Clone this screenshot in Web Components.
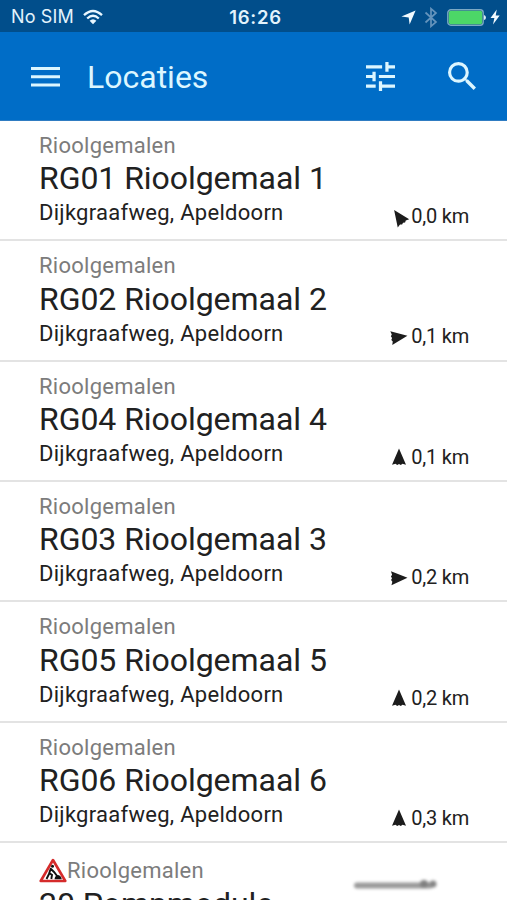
<!DOCTYPE html>
<html lang="nl">
<head>
<meta charset="utf-8">
<title>Locaties</title>
<style>
  body {
    margin: 0;
    height: 900px;
    overflow: hidden;
    background: #fff;
    font-family: Roboto, "Liberation Sans", sans-serif;
  }
</style>
</head>
<body>
<locaties-app></locaties-app>

<template id="status-bar">
<style>
  :host {
    display: grid;
    grid-template-columns: 1fr auto 1fr;
    align-items: center;
    height: 32px;
    padding: 2px 7px 0 11px;
    box-sizing: border-box;
    background: #014e8b;
    color: #e3f3fc;
    font: 18px/30px Inter, Roboto, sans-serif;
  }
  .left, .right {
    display: flex;
    align-items: center;
  }
  .right {
    justify-content: flex-end;
  }
  .carrier {
    letter-spacing: 0.15px;
  }
  .time {
    font-size: 18.5px;
    font-weight: 600;
    letter-spacing: 0.75px;
  }
  svg {
    display: block;
  }
  .wifi { margin-left: 9px; }
  .bt { margin-left: 8px; }
  .battery { margin-left: 9px; }
  .bolt { margin-left: 4px; }
</style>
<div class="left">
  <span class="carrier"><slot name="carrier"></slot></span>
  <svg class="wifi" width="20" height="16" viewBox="0 0 20 16" fill="none" stroke="#e9f7ff" stroke-width="2.3">
    <path d="M1 6.2Q10-2.2 19 6.2M4.2 9.5Q10 4 15.8 9.5"/>
    <path d="M6.6 11.8Q10 8.8 13.4 11.8L10 15.2Z" fill="#e9f7ff" stroke="none"/>
  </svg>
</div>
<span class="time"><slot name="time"></slot></span>
<div class="right">
  <svg width="15" height="15" viewBox="0 0 15 15"><path d="M14.6.4L8.6 14.6L7.7 7.5L.4 6.6Z" fill="#f1faff"/></svg>
  <svg class="bt" width="14" height="21" viewBox="0 0 14 21" fill="none" stroke="#6594bc" stroke-width="1.7"><path d="M1.5 5.5L12 15L7 19.3V1.7L12 6L1.5 15.5"/></svg>
  <svg class="battery" width="39" height="17" viewBox="0 0 39 17">
    <rect x=".8" y=".8" width="35.4" height="15.4" rx="3" fill="#06497f" stroke="#7ca9c4" stroke-width="1.4"/>
    <rect x="1.8" y="1.8" width="33.4" height="13.4" rx="1.8" fill="#4cd767"/>
    <path d="M37 6Q39 6.5 39 8.5Q39 10.5 37 11Z" fill="#d7ebf5"/>
  </svg>
  <svg class="bolt" width="10" height="16" viewBox="0 0 10 16"><path d="M6.8.5L.5 9H4.400L3 15.5L9.700 6.600H5.700Z" fill="#f1faff"/></svg>
</div>
</template>

<template id="app-bar">
<style>
  :host {
    display: flex;
    align-items: center;
    height: 89px;
    padding: 0 31px;
    box-sizing: border-box;
    background: #006dc7;
    border-bottom: 1px solid #2f7cc2;
    color: #dcf6ff;
  }
  h1 {
    flex: 1;
    margin: 2px 0 0 27px;
    font-size: 32px;
    font-weight: 400;
    line-height: 40px;
    letter-spacing: 0;
  }
  svg {
    display: block;
    fill: currentColor;
  }
  .menu {
    margin-top: 2px;
  }
  .search {
    margin-left: 53px;
  }
</style>
<svg class="menu" width="29" height="20" viewBox="0 0 29 20"><path d="M0 0h29v3H0zM0 8.300h29v3H0zM0 16.500h29v3H0z"/></svg>
<h1><slot></slot></h1>
<svg width="29" height="29" viewBox="3 3 18 18"><path d="M3 17v2h6v-2H3zM3 5v2h10V5H3zm10 16v-2h8v-2h-8v-2h-2v6h2zM7 9v2H3v2h4v2h2V9H7zm14 4v-2H11v2h10zm-6-4h2V7h4V5h-4V3h-2v6z"/></svg>
<svg class="search" width="28" height="28" viewBox="3 3 17.5 17.5"><path d="M15.5 14h-.79l-.28-.27A6.471 6.471 0 0 0 16 9.5 6.5 6.5 0 1 0 9.5 16c1.610 0 3.090-.59 4.230-1.570l.27.28v.79l5 4.990L20.490 19l-4.990-5zm-6 0C7.010 14 5 11.990 5 9.5S7.010 5 9.5 5 14 7.010 14 9.5 11.990 14 9.5 14z"/></svg>
</template>

<template id="location-item">
<style>
  :host {
    display: flex;
    justify-content: space-between;
    align-items: flex-end;
    height: 120.35px;
    padding: 0 38px 12px 39px;
    box-sizing: border-box;
    border-bottom: 2px solid #e3e3e3;
    color: #212121;
    white-space: nowrap;
  }
  .category {
    display: flex;
    align-items: center;
    height: 28px;
    color: #7c7c7c;
    font-size: 22px;
    letter-spacing: 0.26px;
  }
  .name {
    font-size: 32px;
    line-height: 39px;
    letter-spacing: -0.05px;
  }
  .address {
    font-size: 22px;
    line-height: 29px;
    letter-spacing: 0.28px;
  }
  .distance {
    display: flex;
    align-items: center;
    gap: 4px;
    font-size: 20px;
    line-height: 24px;
    letter-spacing: -0.2px;
    margin-bottom: -0.8px;
  }
  .arrow {
    display: block;
    margin-top: 1px;
  }
  .warning {
    display: none;
  }
  :host([works]) .warning {
    display: block;
  }
  :host([works]) {
    height: 123.6px;
  }
</style>
<div>
  <div class="category">
    <svg class="warning" width="28" height="25" viewBox="0 0 28 25">
      <path d="M14 2L26.300 23H1.700Z" fill="#fff" stroke="#d52b2b" stroke-width="2.600" stroke-linejoin="round"/>
      <circle cx="13.5" cy="8.300" r="1.5" fill="#111"/>
      <path d="M12 10L10.300 15L13 17L12.300 21M10.5 15L7.5 21M12 11L15 14L18.5 18.5" fill="none" stroke="#111" stroke-width="1.900"/>
      <path d="M15.5 21.300Q16 17.5 19 17Q22 17.5 22.800 21.300Z" fill="#111"/>
    </svg>
    <slot name="category"></slot>
  </div>
  <div class="name"><slot name="name"></slot></div>
  <div class="address"><slot name="address"></slot></div>
</div>
<div class="distance">
  <svg class="arrow" width="16" height="18" viewBox="-8 -9 16 18" overflow="visible"><path d="M0-8.5L7 7.800L3.5 6.800L1.800 8L0 7L-1.800 8L-3.5 6.800L-7 7.800Z" fill="#1c1c1c"/></svg>
  <slot name="distance"></slot>
</div>
</template>

<template id="locaties-app">
<style>
  :host {
    display: block;
    height: 900px;
    overflow: hidden;
    position: relative;
  }
  /* soft shadow floating over the last row */
  .smudge {
    position: absolute;
    left: 354px;
    top: 876px;
    filter: blur(1.5px);
  }
</style>
<status-bar><span slot="carrier">No SIM</span><span slot="time">16:26</span></status-bar>
<app-bar>Locaties</app-bar>
<main></main>
<svg class="smudge" width="86" height="16" viewBox="0 0 86 16"><path d="M3 9.5H76" stroke="#9a9a9a" stroke-width="6" stroke-linecap="round"/><circle cx="70" cy="8" r="4" fill="#808080"/><circle cx="79" cy="8" r="3.5" fill="#858585"/></svg>
</template>

<script>
const attach = (element, id) => {
  const root = element.attachShadow({ mode: "open" });
  root.appendChild(document.getElementById(id).content.cloneNode(true));
  return root;
};

class StatusBar extends HTMLElement {
  constructor() {
    super();
    attach(this, "status-bar");
  }
}

class AppBar extends HTMLElement {
  constructor() {
    super();
    attach(this, "app-bar");
  }
}

class LocationItem extends HTMLElement {
  constructor() {
    super();
    attach(this, "location-item");
  }

  connectedCallback() {
    // turn the arrow towards the location
    const bearing = this.getAttribute("bearing");
    const arrow = this.shadowRoot.querySelector(".arrow path");
    if (bearing === null) {
      this.shadowRoot.querySelector(".distance").remove();
    } else {
      arrow.setAttribute("transform", `rotate(${bearing})`);
    }
  }
}

const locations = [
  ["RG01 Rioolgemaal 1", "0,0 km", -35],
  ["RG02 Rioolgemaal 2", "0,1 km", 82],
  ["RG04 Rioolgemaal 4", "0,1 km", 0],
  ["RG03 Rioolgemaal 3", "0,2 km", 88],
  ["RG05 Rioolgemaal 5", "0,2 km", 0],
  ["RG06 Rioolgemaal 6", "0,3 km", 0],
];

class LocatiesApp extends HTMLElement {
  constructor() {
    super();
    const root = attach(this, "locaties-app");
    const rows = locations.map(([name, distance, bearing]) => `
      <location-item bearing="${bearing}">
        <span slot="category">Rioolgemalen</span>
        <span slot="name">${name}</span>
        <span slot="address">Dijkgraafweg, Apeldoorn</span>
        <span slot="distance">${distance}</span>
      </location-item>`);
    rows.push(`
      <location-item works>
        <span slot="category">Rioolgemalen</span>
        <span slot="name">20 Pompmodule</span>
        <span slot="address">&nbsp;</span>
      </location-item>`);
    root.querySelector("main").innerHTML = rows.join("");
  }
}

customElements.define("status-bar", StatusBar);
customElements.define("app-bar", AppBar);
customElements.define("location-item", LocationItem);
customElements.define("locaties-app", LocatiesApp);
</script>
</body>
</html>
